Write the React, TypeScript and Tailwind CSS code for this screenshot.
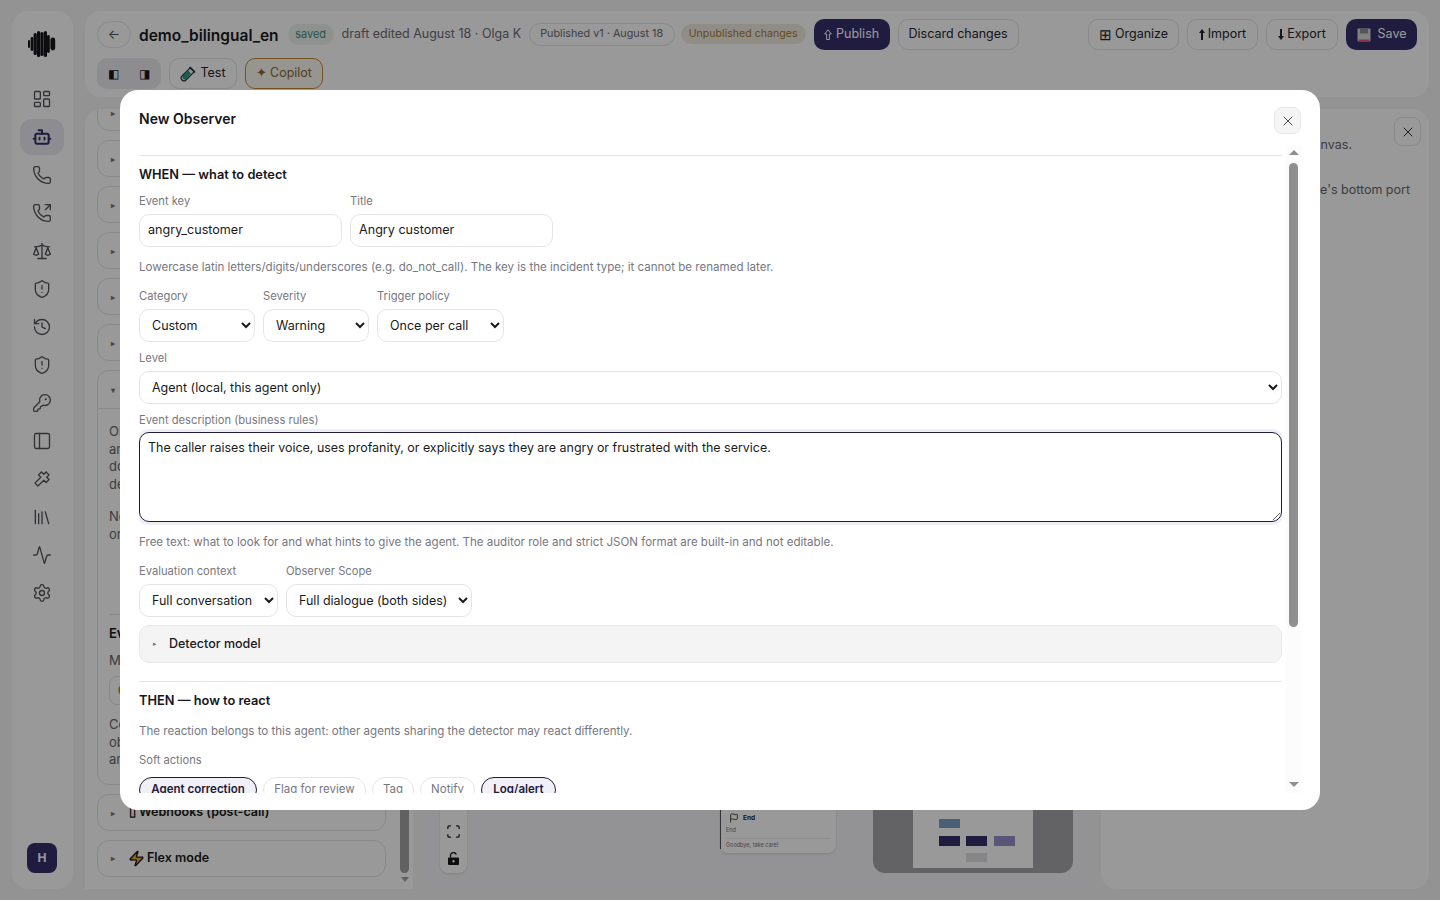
import {
  Activity,
  Bot,
  History,
  KeyRound,
  LayoutDashboard,
  Library,
  Flag,
  PanelLeft,
  Phone,
  PhoneOutgoing,
  Scale,
  Scan,
  Settings,
  ShieldAlert,
  X,
  Zap,
} from "lucide-react";

// Diagonal plug-like glyph from the sidebar, not in lucide
function PluginIcon({ size, strokeWidth }: { size: number; strokeWidth: number }) {
  return (
    <svg width={size} height={size} viewBox="0 0 24 24" fill="none" stroke="currentColor" strokeWidth={strokeWidth} strokeLinejoin="round">
      <g transform="rotate(45 12 12)">
        <path d="M9.5 2.5h5v4h4v5h-4v10h-5v-10h-4v-5h4z" />
      </g>
    </svg>
  );
}

const sidebarIcons = [
  LayoutDashboard,
  Bot,
  Phone,
  PhoneOutgoing,
  Scale,
  ShieldAlert,
  History,
  ShieldAlert,
  KeyRound,
  PanelLeft,
  PluginIcon,
  Library,
  Activity,
  Settings,
];

function Sidebar() {
  return (
    <aside className="w-[61px] shrink-0 rounded-2xl bg-white flex flex-col items-center pt-[20px] pb-[16px] pr-[1px]">
      {/* Logo */}
      <svg width="28" height="26" viewBox="0 0 28 26" className="mb-[24px] text-[#16161c]" fill="currentColor">
        <rect x="0" y="9" width="2" height="8" rx="1" />
        <rect x="2.6" y="6" width="2.8" height="14" rx="1.4" />
        <rect x="5.6" y="2" width="3.2" height="22" rx="1.6" />
        <rect x="9" y="0" width="3.2" height="26" rx="1.6" />
        <rect x="12.4" y="1" width="3.2" height="24" rx="1.6" />
        <rect x="15.8" y="0" width="3.2" height="26" rx="1.6" />
        <rect x="19" y="4" width="2.8" height="18" rx="1.4" />
        <rect x="22.4" y="6.5" width="4.8" height="13" rx="2.4" />
      </svg>
      <nav className="flex flex-col items-center gap-[2px]">
        {sidebarIcons.map((Icon, i) => (
          <div
            key={i}
            className={`w-[44px] h-[36px] rounded-xl flex items-center justify-center ${
              i === 1 ? "bg-[#ebebf2] text-[#352f6b]" : "text-[#55555c]"
            }`}
          >
            <Icon size={20} strokeWidth={i === 1 ? 2.4 : 1.6} />
          </div>
        ))}
      </nav>
      <div className="mt-auto w-[30px] h-[30px] rounded-lg bg-[#352f6b] text-white text-[12px] font-bold flex items-center justify-center">
        H
      </div>
    </aside>
  );
}

function GhostButton({ children, className = "" }: { children: React.ReactNode; className?: string }) {
  return (
    <button
      className={`h-[31px] rounded-[10px] border border-[#e4e4e8] text-[12.5px] text-[#26262c] flex items-center justify-center gap-[3px] ${className}`}
    >
      {children}
    </button>
  );
}

function DarkButton({ children, className = "" }: { children: React.ReactNode; className?: string }) {
  return (
    <button
      className={`h-[31px] rounded-[10px] bg-[#352f6b] text-[12.5px] text-white flex items-center justify-center gap-[4px] ${className}`}
    >
      {children}
    </button>
  );
}

function SolidArrow({ down }: { down?: boolean }) {
  return (
    <svg width="6" height="11" viewBox="0 0 6 11" className={`text-[#26262c] ${down ? "rotate-180" : ""}`} fill="currentColor">
      <path d="M3 0 L6 4 H4 V11 H2 V4 H0 Z" />
    </svg>
  );
}

function TopBar() {
  return (
    <header className="h-[86px] shrink-0 rounded-2xl bg-white pl-[12px] pr-[12px] pt-[8px]">
      <div className="flex items-center h-[31px]">
        <button className="w-[34px] h-[27px] rounded-full border border-[#e4e4e8] text-[13px] text-[#55555c] flex items-center justify-center">
          ←
        </button>
        <h1 className="ml-[8px] mt-[3px] text-[15.5px] font-semibold text-[#1a1a20]">demo_bilingual_en</h1>
        <span className="ml-[9px] w-[46px] h-[21px] rounded-full bg-[#eef2ef] text-[11px] text-[#3f8f78] flex items-center justify-center">
          saved
        </span>
        <span className="ml-[8px] w-[179px] text-[12.5px] text-[#6b6b73] whitespace-nowrap">
          draft edited August 18 · Olga K
        </span>
        <span className="ml-[8px] w-[146px] h-[23px] rounded-full border border-[#e4e4e8] text-[10.8px] text-[#6b6b73] flex items-center justify-center">
          Published v1 · August 18
        </span>
        <span className="ml-[6px] -mt-[2px] w-[125px] h-[20px] rounded-full bg-[#f0ece2] text-[10.6px] text-[#a87a2c] flex items-center justify-center">
          Unpublished changes
        </span>
        <DarkButton className="ml-[8px] w-[76px]">
          <svg width="8" height="11" viewBox="0 0 8 11" fill="none" stroke="currentColor" strokeWidth="1">
            <path d="M4 0.8 L7.4 5 H5.4 V10.5 H2.6 V5 H0.6 Z" />
          </svg>
          Publish
        </DarkButton>
        <GhostButton className="ml-[8px] w-[121px]">Discard changes</GhostButton>
        <GhostButton className="ml-auto w-[91px]">
          <span className="text-[15px] leading-none">⊞</span> Organize
        </GhostButton>
        <GhostButton className="ml-[8px] w-[71px]">
          <SolidArrow /> Import
        </GhostButton>
        <GhostButton className="ml-[8px] w-[72px]">
          <SolidArrow down /> Export
        </GhostButton>
        <DarkButton className="ml-[8px] w-[71px]">
          <svg width="14" height="14" viewBox="0 0 14 14" className="mr-[3px]">
            <rect x="0.5" y="0.5" width="13" height="13" rx="1" fill="#d8d8dc" />
            <rect x="3" y="0.5" width="8" height="5" fill="#8d8d95" />
            <rect x="1.5" y="11.5" width="11" height="2" fill="#e0526a" />
          </svg>
          Save
        </DarkButton>
      </div>
      <div className="flex items-center mt-[8px]">
        <div className="w-[64px] h-[31px] rounded-[10px] bg-[#ebebef] flex items-center justify-center gap-[20px] text-[12px] text-[#16161c]">
          <span>◧</span>
          <span>◨</span>
        </div>
        <GhostButton className="ml-[8px] w-[68px]">
          <svg width="16" height="16" viewBox="0 0 16 16" className="mr-[1px]">
            <path d="M10.5 1.5 L14.5 5.5 L6 14 a2.8 2.8 0 0 1-4-4 Z" fill="#f4f4f6" stroke="#26303a" strokeWidth="1.1" />
            <path d="M8 4.5 L11 7.5 L6 13.4 a2.6 2.6 0 0 1-3.4-3.4 Z" fill="#1f9d84" />
            <path d="M9.5 1 L15 6.5" stroke="#26303a" strokeWidth="1.2" />
          </svg>
          Test
        </GhostButton>
        <button className="ml-[8px] w-[78px] h-[31px] rounded-[10px] border border-[#c48a35] bg-[#fbf8f1] text-[12.5px] text-[#8a6a36] flex items-center justify-center gap-[3px]">
          <span>✦</span> Copilot
        </button>
      </div>
    </header>
  );
}

function AccordionRow({ children }: { children?: React.ReactNode }) {
  return (
    <div className="w-[289px] h-[37px] rounded-xl border border-[#e4e4e8] flex items-center pl-[13px] text-[12.5px] font-semibold text-[#1a1a20] whitespace-nowrap">
      <span className="text-[8px] text-[#77777f] w-[18px]">▸</span>
      {children}
    </div>
  );
}

function LeftPanel() {
  return (
    <section className="w-[328px] shrink-0 rounded-t-2xl bg-white flex overflow-hidden">
      <div className="flex-1 pl-[12px] flex flex-col gap-[9px] -mt-[15px]">
        <AccordionRow>Agent prompt</AccordionRow>
        <AccordionRow>Voice</AccordionRow>
        <AccordionRow>Language</AccordionRow>
        <AccordionRow>Tools</AccordionRow>
        <AccordionRow>Knowledge base</AccordionRow>
        <AccordionRow>Variables</AccordionRow>
        <div className="w-[289px] h-[415px] rounded-xl border border-[#e4e4e8] overflow-hidden">
          <div className="h-[38px] border-b border-[#e4e4e8] flex items-center pl-[13px] text-[12.5px] font-semibold text-[#1a1a20]">
            <span className="text-[8px] text-[#77777f] w-[18px]">▾</span>
            Observers
          </div>
          <div className="px-[11px] text-[13px] leading-[17.5px] text-[#66666e] whitespace-nowrap">
            <p className="mt-[14px]">
              Observers watch each call
              <br />
              and flag incidents. They
              <br />
              do not speak to the caller;
              <br />
              detection runs in parallel.
            </p>
            <p className="mt-[15px]">
              No observers yet. Add one
              <br />
              or start from a template.
            </p>
            <div className="mt-[71px] border-t border-[#e4e4e8]" />
            <h3 className="mt-[10px] font-semibold text-[#1a1a20]">Event detection</h3>
            <p className="mt-[9px]">Minimum confidence</p>
            <div className="mt-[7px] h-[29px] w-[120px] rounded-lg border border-[#e4e4e8] pl-[8px] flex items-center font-semibold text-[#a87a2c]">
              0.7
            </div>
            <p className="mt-[11px]">
              Confidence applies to all
              <br />
              observers of this agent
              <br />
              and can be changed later.
            </p>
          </div>
        </div>
        <AccordionRow>
          <span className="mr-[3px]">▯</span>Webhooks (post-call)
        </AccordionRow>
        <div className="-mt-[0.5px]">
          <AccordionRow>
            <Zap size={17} className="-ml-[1px] mr-[2px] text-[#1a1a20] fill-[#e8b02c]" />
            Flex mode
          </AccordionRow>
        </div>
      </div>
      {/* Panel scrollbar */}
      <div className="w-[14px] pr-[3px] flex flex-col items-center pb-[7px]">
        <div className="w-[9px] flex-1 rounded-full bg-[#a2a2a2] mb-[4px]" />
        <div className="w-0 h-0 border-x-[4px] border-x-transparent border-t-[5px] border-t-[#a2a2a2]" />
      </div>
    </section>
  );
}

function Canvas() {
  return (
    <section className="relative flex-1 rounded-b-2xl bg-[#f6f6f8] overflow-hidden">
      {/* Controls */}
      <div className="absolute left-[15px] bottom-[16px] w-[27px] h-[74px] rounded-lg bg-white shadow flex flex-col items-center justify-end gap-[13px] pb-[8px] text-[#16161c]">
        <Scan size={15} />
        <svg width="11" height="13" viewBox="0 0 11 13" fill="currentColor">
          <path fillRule="evenodd" d="M1 5.5h9a1 1 0 0 1 1 1V12a1 1 0 0 1-1 1H1a1 1 0 0 1-1-1V6.500a1 1 0 0 1 1-1zM5.500 8a1.200 1.200 0 1 0 0 2.400 1.200 1.200 0 0 0 0-2.400z" />
          <path d="M2.500 5.500V3.500a3 3 0 0 1 5.800-1" fill="none" stroke="currentColor" strokeWidth="1.300" />
        </svg>
      </div>
      {/* End node */}
      <div className="absolute left-[295px] bottom-[36px] w-[116px] h-[62px] rounded-lg bg-white shadow-sm pl-[6px] pr-[6px] pt-[22px]">
        <div className="absolute left-0 top-[19px] bottom-[4px] border-l border-l-[#55555c]" />
        <div className="flex items-center gap-[4px] text-[6.5px] leading-[10px] font-bold text-[#26262c]">
          <Flag size={10} className="ml-[3px]" />
          End
        </div>
        <div className="mt-[3px] text-[5.5px] leading-[8px] text-[#77777f]">End</div>
        <div className="mt-[4px] pt-[2px] border-t border-[#ececf0] text-[5.5px] leading-[8px] text-[#77777f]">Goodbye, take care!</div>
      </div>
      {/* Minimap */}
      <div className="absolute left-[448px] bottom-[16px] w-[200px] h-[100px] rounded-b-xl bg-[#a6a6a8]">
        <div className="absolute left-[40px] bottom-[5px] w-[120px] h-[90px] bg-white">
          <div className="absolute left-[26px] bottom-[40px] w-[21px] h-[9px] bg-[#7c9ec3]" />
          <div className="absolute left-[26px] bottom-[22px] w-[21px] h-[10px] bg-[#352f6b]" />
          <div className="absolute left-[53px] bottom-[22px] w-[21px] h-[10px] bg-[#352f6b]" />
          <div className="absolute left-[81px] bottom-[22px] w-[21px] h-[10px] bg-[#9490cc]" />
          <div className="absolute left-[53px] bottom-[6px] w-[21px] h-[9px] bg-[#e0e0e4]" />
        </div>
      </div>
    </section>
  );
}

function RightPanel() {
  return (
    <section className="w-[328px] shrink-0 rounded-2xl bg-white flex flex-col items-end text-[12.5px] text-[#66666e] whitespace-nowrap pt-[8px] pr-[8px]">
      <button className="w-[27px] h-[29px] rounded-lg border border-[#e4e4e8] text-[#26262c] flex items-center justify-center">
        <X size={16} strokeWidth={1.4} />
      </button>
      <p className="-mt-[10px] mr-[69px]">Drag nodes to arrange them on the canvas.</p>
      <p className="mt-[26px] mr-[11px]">Draw a transition from a node's bottom port</p>
    </section>
  );
}

function Label({ children }: { children: React.ReactNode }) {
  return <label className="block text-[11.2px] leading-[16px] text-[#77777f]">{children}</label>;
}

function Hint({ children, className = "" }: { children: React.ReactNode; className?: string }) {
  return <p className={`text-[11.55px] leading-[16px] text-[#77777f] ${className}`}>{children}</p>;
}

function Field({ label, value, className = "" }: { label: string; value: string; className?: string }) {
  return (
    <div>
      <Label>{label}</Label>
      <input
        readOnly
        value={value}
        className={`mt-[5px] block h-[33px] rounded-[10px] border border-[#e5e5e7] px-[8px] pb-[2px] text-[12.6px] text-[#1a1a20] outline-none ${className}`}
      />
    </div>
  );
}

function Choice({ label, value, className = "" }: { label: string; value: string; className?: string }) {
  return (
    <div>
      <Label>{label}</Label>
      <select
        value={value}
        onChange={() => {}}
        className={`mt-[5px] block h-[33px] rounded-[10px] border border-[#e5e5e7] px-[8px] text-[12.5px] text-[#1a1a20] bg-white outline-none ${className}`}
      >
        <option>{value}</option>
      </select>
    </div>
  );
}

function Chip({ children, active, className = "" }: { children: React.ReactNode; active?: boolean; className?: string }) {
  return (
    <span
      className={`h-[26px] rounded-full border text-[11.5px] flex items-center justify-center whitespace-nowrap ${
        active
          ? "border-[#1e1b3f] bg-[#f1f0f6] text-[#1e1b3f] font-semibold"
          : "border-[#e5e5e7] text-[#77777f]"
      } ${className}`}
    >
      {children}
    </span>
  );
}

function ObserverModal() {
  return (
    <div className="fixed inset-0 bg-black/40 flex items-center justify-center">
      <div className="w-[1200px] h-[720px] rounded-[18px] bg-white flex flex-col pb-[17px]">
        {/* Header */}
        <div className="h-[55px] shrink-0 flex items-start justify-between pl-[19px] pr-[19px]">
          <h2 className="mt-[19px] text-[14px] leading-[20px] font-semibold text-[#16161c]">New Observer</h2>
          <button className="mt-[17px] w-[27px] h-[27px] rounded-lg border border-[#e8e8ea] bg-[#f5f5f6] text-[#3a3a40] flex items-center justify-center">
            <X size={16} strokeWidth={1.4} />
          </button>
        </div>

        {/* Body */}
        <div className="flex-1 min-h-0 flex pl-[19px] pr-[19px]">
          <div className="w-[1143px] overflow-hidden pt-[10px]">
            <div className="border-t border-[#e5e5e7]" />
            <h3 className="mt-[9px] text-[12.8px] leading-[20px] font-semibold text-[#16161c]">WHEN — what to detect</h3>

            <div className="mt-[8px] flex gap-[8px]">
              <Field label="Event key" value="angry_customer" className="w-[203px]" />
              <Field label="Title" value="Angry customer" className="w-[203px]" />
            </div>
            <Hint className="mt-[12px]">
              Lowercase latin letters/digits/underscores (e.g. do_not_call). The key is the incident type; it cannot be
              renamed later.
            </Hint>

            <div className="mt-[13px] flex gap-[8px]">
              <Choice label="Category" value="Custom" className="w-[116px]" />
              <Choice label="Severity" value="Warning" className="w-[106px]" />
              <Choice label="Trigger policy" value="Once per call" className="w-[127px]" />
            </div>

            <div className="mt-[8px]">
              <Choice label="Level" value="Agent (local, this agent only)" className="w-full" />
            </div>

            <div className="mt-[8px]">
              <Label>Event description (business rules)</Label>
              <textarea
                readOnly
                value="The caller raises their voice, uses profanity, or explicitly says they are angry or frustrated with the service."
                className="mt-[4px] block w-full h-[90px] rounded-[10px] border border-[#1e1b3f] px-[8px] py-[6px] text-[12.45px] leading-[18px] text-[#1a1a20] outline-none ring-[3px] ring-[#efeef5]"
              />
            </div>
            <Hint className="mt-[12px]">
              Free text: what to look for and what hints to give the agent. The auditor role and strict JSON format are
              built-in and not editable.
            </Hint>

            <div className="mt-[13px] flex gap-[8px]">
              <Choice label="Evaluation context" value="Full conversation" className="w-[139px]" />
              <Choice label="Observer Scope" value="Full dialogue (both sides)" className="w-[186px]" />
            </div>

            <div className="mt-[8px] h-[38px] rounded-[10px] border border-[#e8e8ea] bg-[#f4f4f5] flex items-center pl-[13px] text-[12.5px] font-medium text-[#1a1a20]">
              <span className="text-[7px] text-[#77777f] w-[16px]">▸</span>
              Detector model
            </div>

            <div className="mt-[18px] border-t border-[#e5e5e7]" />
            <h3 className="mt-[9px] text-[12.8px] leading-[20px] font-semibold text-[#16161c]">THEN — how to react</h3>
            <Hint className="mt-[12px]">
              The reaction belongs to this agent: other agents sharing the detector may react differently.
            </Hint>
            <div className="mt-[13px]">
              <Label>Soft actions</Label>
            </div>
            <div className="mt-[9px] flex gap-[6px]">
              <Chip active className="w-[118px]">Agent correction</Chip>
              <Chip className="w-[103px]">Flag for review</Chip>
              <Chip className="w-[42px]">Tag</Chip>
              <Chip className="w-[55px]">Notify</Chip>
              <Chip active className="w-[75px]">Log/alert</Chip>
            </div>
          </div>

          {/* Modal scrollbar */}
          <div className="ml-[4px] w-[15px] bg-[#fcfcfc] flex flex-col items-center pt-[5px] pb-[6px]">
            <div className="w-0 h-0 border-x-[5px] border-x-transparent border-b-[5px] border-b-[#8f8f8f]" />
            <div className="mt-[8px] w-[9px] h-[464px] rounded-full bg-[#8f8f8f]" />
            <div className="mt-auto w-0 h-0 border-x-[5px] border-x-transparent border-t-[5px] border-t-[#8f8f8f]" />
          </div>
        </div>
      </div>
    </div>
  );
}

export default function App() {
  return (
    <div className="h-screen overflow-hidden bg-[#f5f5f7] flex gap-[12px] pl-[12px] pr-[11px] pt-[11px] pb-[11px] font-['Inter',sans-serif]">
      <Sidebar />
      <main className="flex-1 min-w-0 flex flex-col gap-[12px]">
        <TopBar />
        <div className="flex-1 min-h-0 flex gap-[12px]">
          <LeftPanel />
          <Canvas />
          <RightPanel />
        </div>
      </main>
      <ObserverModal />
    </div>
  );
}
